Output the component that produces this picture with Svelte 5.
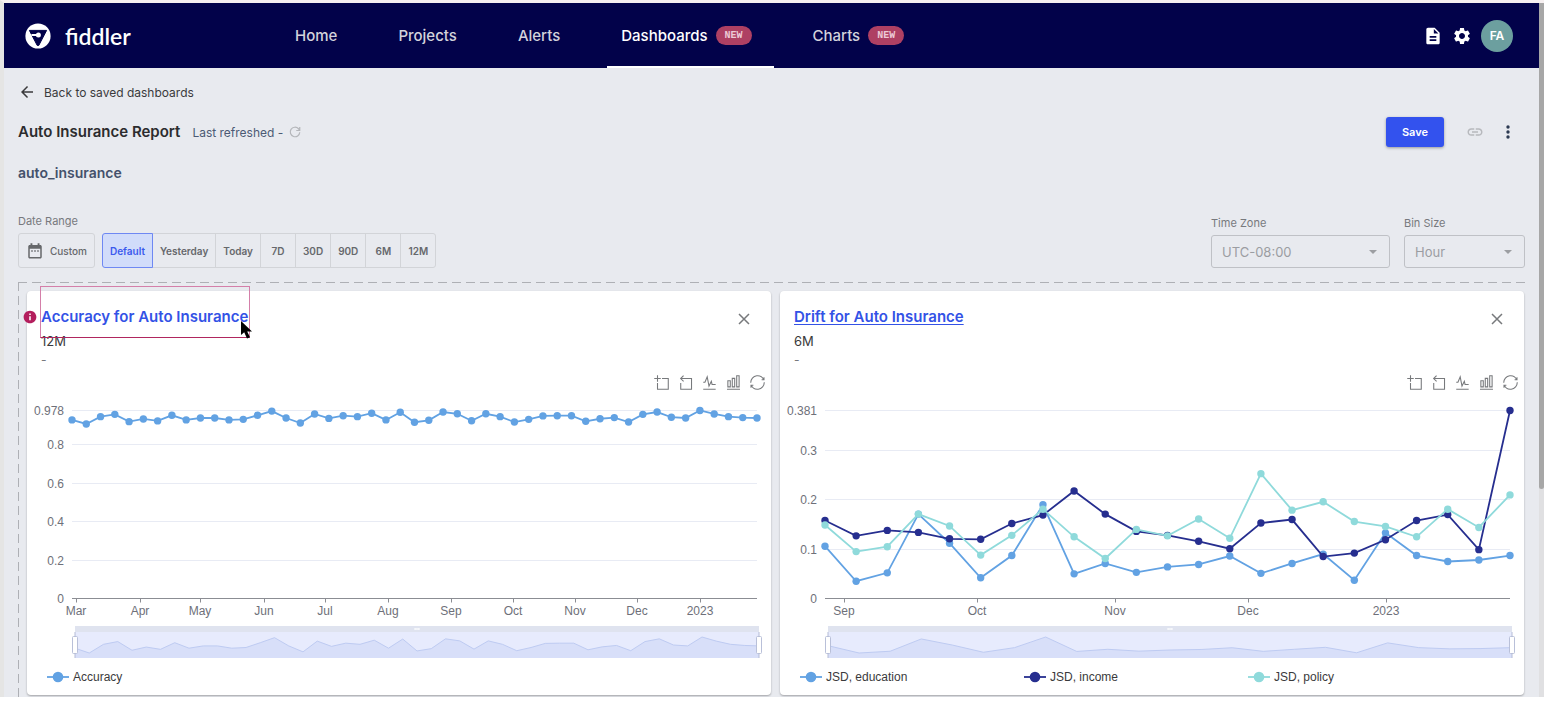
<script>
  const navItems = [
    { label: 'Home' },
    { label: 'Projects' },
    { label: 'Alerts' },
    { label: 'Dashboards', isNew: true, active: true },
    { label: 'Charts', isNew: true }
  ]

  const ranges = ['Default', 'Yesterday', 'Today', '7D', '30D', '90D', '6M', '12M']
  let selectedRange = $state('Default')

  const tools = [
    { name: 'Zoom', d: 'M0,13.5h26.9 M13.5,26.9V0 M32.1,13.5H58V58H13.5 V32.1' },
    { name: 'Zoom reset', d: 'M22,1.4L9.9,13.5l12.3,12.3 M10.3,13.5H54.9v44.6 H10.3v-26' },
    { name: 'Line chart', d: 'M4.1,28.9h7.1l9.3-22l7.4,38l9.7-19.7l3,12.8h14.9M4.1,58h51.4' },
    { name: 'Bar chart', d: 'M6.7,22.9h10V48h-10V22.9zM24.9,13h10v35h-10V13zM43.2,2h10v46h-10V2zM3.1,58h53.7' },
    { name: 'Restore', d: 'M47,18.9h9.8V8.7 M56.3,20.1 C52.1,9,40.5,0.6,26.8,2.1C12.6,3.7,1.6,16.2,2.1,30.6 M13,41.1H3.1v10.2 M3.7,39.9c4.2,11.1,15.8,19.5,29.5,18 c14.2-1.6,25.2-14.1,24.7-28.5' }
  ]

  const charts = [
    {
      title: 'Accuracy for Auto Insurance',
      period: '12M',
      highlighted: true,
      max: 0.978,
      yTicks: [0, 0.2, 0.4, 0.6, 0.8, 0.978],
      xTicks: [
        ['Mar', 49], ['Apr', 113], ['May', 173], ['Jun', 237], ['Jul', 298], ['Aug', 361],
        ['Sep', 424], ['Oct', 486], ['Nov', 548], ['Dec', 610], ['2023', 673]
      ],
      series: [
        {
          name: 'Accuracy',
          color: '#62a2e3',
          values: [
            .929, .908, .946, .958, .920, .934, .924, .953, .929, .939, .939, .929, .932, .953, .975,
            .939, .913, .960, .937, .951, .946, .964, .929, .969, .917, .927, .970, .961, .925, .961,
            .946, .918, .932, .950, .951, .951, .922, .935, .941, .918, .958, .970, .943, .939, .978,
            .960, .946, .941, .939
          ]
        }
      ]
    },
    {
      title: 'Drift for Auto Insurance',
      period: '6M',
      highlighted: false,
      max: 0.381,
      yTicks: [0, 0.1, 0.2, 0.3, 0.381],
      xTicks: [['Sep', 64], ['Oct', 197], ['Nov', 335], ['Dec', 468], ['2023', 606]],
      series: [
        {
          name: 'JSD, education',
          color: '#62a2e3',
          values: [
            .106, .035, .052, .171, .112, .042, .087, .190, .050, .071, .053, .064, .069, .086, .051,
            .071, .090, .037, .133, .087, .075, .078, .087
          ]
        },
        {
          name: 'JSD, income',
          color: '#262e8f',
          values: [
            .158, .127, .138, .134, .121, .120, .152, .169, .218, .171, .136, .128, .116, .101, .153,
            .160, .085, .092, .119, .158, .170, .099, .381
          ]
        },
        {
          name: 'JSD, policy',
          color: '#8fdadb',
          values: [
            .149, .095, .105, .171, .147, .088, .128, .181, .125, .081, .140, .127, .161, .122, .253,
            .179, .196, .156, .146, .125, .181, .144, .210
          ]
        }
      ]
    }
  ]

  // plot area inside the 744 x 262 viewBox
  const left = 45
  const right = 730
  const top = 10.5
  const bottom = 198.5

  function yPos(value, max) {
    return bottom - (value / max) * (bottom - top)
  }

  function points(values, max) {
    return values.map((v, i) => [
      left + (i * (right - left)) / (values.length - 1),
      yPos(v, max)
    ])
  }

  function sliderLine(values) {
    const lo = Math.min(...values)
    const hi = Math.max(...values)
    return values
      .map((v, i) => `${48 + (i * 684) / (values.length - 1)},${253 - ((v - lo) / (hi - lo)) * 16}`)
      .join(' ')
  }
</script>

<div class="app">
  <div class="content">
    <header>
      <a class="brand" href="/">
        <svg width="26" height="26" viewBox="0 0 26 26" aria-hidden="true">
          <circle cx="13" cy="13" r="12.6" fill="#fff" />
          <path d="M4.4 7.4h17.2L13.8 22.4h-1.6z" fill="#02024a" stroke="#02024a" stroke-linejoin="round" />
          <path d="M6.4 12h6" stroke="#fff" stroke-width="2" />
          <circle cx="13.4" cy="12" r="2.5" fill="#fff" />
        </svg>
        <span>fiddler</span>
      </a>
      <nav>
        {#each navItems as item}
          <a href="/{item.label.toLowerCase()}" class="tab" class:active={item.active}>
            {item.label}
            {#if item.isNew}<span class="new">NEW</span>{/if}
          </a>
        {/each}
      </nav>
      <div class="account">
        <button aria-label="Documentation">
          <svg width="20" height="20" viewBox="0 0 24 24" fill="#fff"><path d="M14 2H6c-1.1 0-1.99.9-1.99 2L4 20c0 1.1.89 2 1.99 2H18c1.1 0 2-.9 2-2V8l-6-6zm2 16H8v-2h8v2zm0-4H8v-2h8v2zm-3-5V3.5L18.5 9H13z" /></svg>
        </button>
        <button aria-label="Settings">
          <svg width="20" height="20" viewBox="0 0 24 24" fill="#fff"><path d="M19.14 12.94c.04-.3.06-.61.06-.94 0-.32-.02-.64-.07-.94l2.03-1.58c.18-.14.23-.41.12-.61l-1.92-3.32c-.12-.22-.37-.29-.59-.22l-2.39.96c-.5-.38-1.03-.7-1.62-.94l-.36-2.54c-.04-.24-.24-.41-.48-.41h-3.84c-.24 0-.43.17-.47.41l-.36 2.54c-.59.24-1.13.57-1.62.94l-2.39-.96c-.22-.08-.47 0-.59.22L2.74 8.87c-.12.21-.08.47.12.61l2.03 1.58c-.05.3-.09.63-.09.94s.02.64.07.94l-2.03 1.58c-.18.14-.23.41-.12.61l1.92 3.32c.12.22.37.29.59.22l2.39-.96c.5.38 1.03.7 1.62.94l.36 2.54c.05.24.24.41.48.41h3.84c.24 0 .44-.17.47-.41l.36-2.54c.59-.24 1.13-.56 1.62-.94l2.39.96c.22.08.47 0 .59-.22l1.92-3.32c.12-.22.07-.47-.12-.61l-2.01-1.58zM12 15.6c-1.98 0-3.6-1.62-3.6-3.6s1.62-3.6 3.6-3.6 3.6 1.62 3.6 3.6-1.62 3.6-3.6 3.6z" /></svg>
        </button>
        <button class="avatar">FA</button>
      </div>
    </header>

    <main>
      <a class="back" href="/dashboards">
        <svg width="18" height="18" viewBox="0 0 24 24" fill="#3a3a3c"><path d="M20 11H7.83l5.59-5.59L12 4l-8 8 8 8 1.41-1.41L7.83 13H20v-2z" /></svg>
        Back to saved dashboards
      </a>

      <div class="title-row">
        <h1>Auto Insurance Report</h1>
        <span class="refreshed">Last refreshed -</span>
        <button class="refresh" aria-label="Refresh">
          <svg width="12" height="12" viewBox="0 0 24 24" fill="none" stroke="#b4b6ba" stroke-width="2.4"><path d="M21.5 2v7h-7M21.5 12.5a9.5 9.5 0 1 1-2.5-7L21.5 8.5" /></svg>
        </button>
        <div class="actions">
          <button class="save">Save</button>
          <button aria-label="Copy link" disabled>
            <svg width="18" height="18" viewBox="0 0 24 24" fill="#b7b9bd"><path d="M3.9 12c0-1.71 1.39-3.1 3.1-3.1h4V7H7c-2.76 0-5 2.24-5 5s2.24 5 5 5h4v-1.9H7c-1.71 0-3.1-1.39-3.1-3.1zM8 13h8v-2H8v2zm9-6h-4v1.9h4c1.71 0 3.1 1.39 3.1 3.1s-1.39 3.1-3.1 3.1h-4V17h4c2.76 0 5-2.24 5-5s-2.24-5-5-5z" /></svg>
          </button>
          <button aria-label="More options">
            <svg width="18" height="18" viewBox="0 0 18 18" fill="#2c3a52"><circle cx="9" cy="4" r="1.7" /><circle cx="9" cy="9" r="1.7" /><circle cx="9" cy="14" r="1.7" /></svg>
          </button>
        </div>
      </div>

      <h2>auto_insurance</h2>

      <div class="filters">
        <div class="field">
          <span class="label" id="range-label">Date Range</span>
          <div class="range" role="group" aria-labelledby="range-label">
            <button class="custom">
              <svg width="18" height="18" viewBox="0 0 24 24" fill="#66686b"><path d="M9 11H7v2h2v-2zm4 0h-2v2h2v-2zm4 0h-2v2h2v-2zm2-7h-1V1.500h-2.500V4H8.500V1.500H6V4H5c-1.110 0-1.990.9-1.990 2L3 20c0 1.100.89 2 2 2h14c1.100 0 2-.9 2-2V6c0-1.100-.9-2-2-2zm0 16H5V9h14v11z" /></svg>
              Custom
            </button>
            <div class="toggle">
              {#each ranges as range}
                <button class:selected={range === selectedRange} onclick={() => (selectedRange = range)}>{range}</button>
              {/each}
            </div>
          </div>
        </div>
        <div class="field zone">
          <label class="label" for="zone">Time Zone</label>
          <div class="select">
            <select id="zone" disabled><option>UTC-08:00</option></select>
            <svg width="8" height="4" viewBox="0 0 8 4" fill="#9c9ea2"><path d="M0 0h8L4 4z" /></svg>
          </div>
        </div>
        <div class="field bin">
          <label class="label" for="bin">Bin Size</label>
          <div class="select">
            <select id="bin" disabled><option>Hour</option></select>
            <svg width="8" height="4" viewBox="0 0 8 4" fill="#9c9ea2"><path d="M0 0h8L4 4z" /></svg>
          </div>
        </div>
      </div>

      <div class="board">
        {#each charts as chart}
          <article>
            <div class="card-head">
              <div class="heading">
                <a href="/charts" class:plain-link={chart.highlighted}>{chart.title}</a>
                {#if chart.highlighted}
                  <svg class="info" width="14" height="14" viewBox="1 1 22 22" fill="#b31e5d"><path d="M12 2C6.480 2 2 6.480 2 12s4.480 10 10 10 10-4.480 10-10S17.520 2 12 2zm1.200 15h-2.400v-6h2.400v6zm0-8h-2.400V6.600h2.400V9z" /></svg>
                  <div class="marker"></div>
                  <svg class="cursor" width="11" height="18" viewBox="0 0 11 18"><path d="M0 0v14l3.200-2.800L6 17.500l3-1.300-2.800-5.700H11z" fill="#000" /></svg>
                {/if}
              </div>
              <button class="close" aria-label="Remove {chart.title}">
                <svg width="12" height="12" viewBox="0 0 12 12" stroke="#77797c" stroke-width="1.5"><path d="M1 1l10 10M11 1L1 11" /></svg>
              </button>
            </div>
            <p class="period">{chart.period}</p>
            <p class="dash">-</p>
            <div class="tools">
              {#each tools as tool}
                <button aria-label={tool.name}>
                  <svg width="15" height="15" viewBox="-1 -1 62 62" fill="none" stroke="#77797c" stroke-width="4.4"><path d={tool.d} /></svg>
                </button>
              {/each}
            </div>

            <svg class="plot" viewBox="0 0 744 262" role="img" aria-label={chart.title}>
              {#each chart.yTicks as tick}
                {@const y = Math.floor(yPos(tick, chart.max)) + 0.5}
                {#if tick > 0}
                  <line x1={left} x2={right} y1={y} y2={y} stroke="#e8ebf4" />
                {/if}
                <text x="37" y={y + 4} text-anchor="end">{tick}</text>
              {/each}
              <line x1={left} x2={right} y1={bottom} y2={bottom} stroke="#8b8d93" />
              {#each chart.xTicks as [label, x]}
                <line x1={x + 0.5} x2={x + 0.5} y1={bottom} y2={bottom + 4} stroke="#8b8d93" />
                <text {x} y="215" text-anchor="middle">{label}</text>
              {/each}

              {#each chart.series as s}
                {@const pts = points(s.values, chart.max)}
                <polyline points={pts.join(' ')} fill="none" stroke={s.color} stroke-width="1.8" />
                {#each pts as [cx, cy]}
                  <circle {cx} {cy} r="3.7" fill={s.color} />
                {/each}
              {/each}

              <rect x="48" y="226" width="684" height="6" fill="#dfe3ef" />
              <rect x="48" y="232" width="684" height="26" fill="#e7ebfd" />
              <polygon points="48,258 {sliderLine(chart.series[0].values)} 732,258" fill="#d8dff9" />
              <polyline points={sliderLine(chart.series[0].values)} fill="none" stroke="#becbf2" />
              <path d="M387.5 229h5" stroke="#fff" stroke-width="2" stroke-dasharray="1.2 .7" />
              {#each [48, 732] as x}
                <path d="M{x} 232v26" stroke="#b5bcd6" />
                <rect x={x - 2.5} y="236.5" width="5" height="17" rx="1" fill="#fff" stroke="#b9c0d9" />
              {/each}
            </svg>

            <div class="legend">
              {#each chart.series as s}
                <button>
                  <svg width="22" height="12" viewBox="0 0 22 12"><path d="M0 6h22" stroke={s.color} stroke-width="1.8" /><circle cx="11" cy="6" r="5.3" fill={s.color} /></svg>
                  {s.name}
                </button>
              {/each}
            </div>
          </article>
        {/each}
      </div>
    </main>
  </div>
  <div class="scrollbar"><div class="thumb"></div></div>
</div>

<style>
  :global(body) {
    background: #fff;
  }
  .app {
    display: flex;
    font-family: Inter, "Liberation Sans", sans-serif;
    border-top: 3px solid #f6f0f1;
    border-left: 4px solid #e5e5e4;
    background: #e8eaef;
  }
  .content {
    flex: 1;
    min-width: 0;
  }
  button {
    font-family: inherit;
    border: 0;
    padding: 0;
    background: none;
    cursor: pointer;
  }
  svg {
    display: block;
    flex-shrink: 0;
  }
  header {
    display: flex;
    height: 65px;
    padding: 0 26px 0 21px;
    background: #02024a;
  }
  .brand {
    display: flex;
    align-items: center;
    flex: 0 0 256px;
    gap: 14px;
    color: #fff;
    font-family: Lato, sans-serif;
    font-size: 23px;
    font-weight: 600;
    text-decoration: none;
  }
  nav {
    display: flex;
    gap: 25px;
  }
  .tab {
    display: flex;
    align-items: center;
    gap: 8px;
    padding: 2px 22px 0 14px;
    border-bottom: 2px solid transparent;
    color: #d3d3dc;
    font-size: 15px;
    font-weight: 500;
    text-decoration: none;
  }
  .tab.active {
    color: #fff;
    border-color: #fff;
  }
  .new {
    padding: 0 9px;
    border-radius: 10px;
    background: #ae4063;
    color: #ecc9d5;
    font-family: "Liberation Mono", monospace;
    font-size: 10px;
    font-weight: 700;
    line-height: 19px;
  }
  .account {
    display: flex;
    align-items: center;
    gap: 9px;
    margin-left: auto;
  }
  .avatar {
    width: 32px;
    height: 32px;
    border-radius: 50%;
    background: #6c9f9f;
    color: #fff;
    font-size: 12px;
    font-weight: 600;
  }
  main {
    padding: 14px 14px 0;
  }
  .back {
    display: flex;
    align-items: center;
    gap: 8px;
    height: 20px;
    color: #3a3a3c;
    font-size: 12px;
    text-decoration: none;
  }
  .title-row {
    display: flex;
    align-items: center;
    height: 30px;
    margin-top: 15px;
  }
  h1, h2 {
    margin: 0;
    font-size: 15px;
    line-height: 20px;
  }
  h1 {
    color: #2c2c2e;
    font-weight: 600;
  }
  h2 {
    margin-top: 16px;
    color: #44516b;
    font-size: 14px;
    font-weight: 600;
  }
  .refreshed {
    margin: 0 6px 0 12px;
    color: #4c5a74;
    font-size: 12px;
  }
  .actions {
    display: flex;
    align-items: center;
    gap: 15px;
    margin-left: auto;
    padding-right: 8px;
  }
  .save {
    width: 58px;
    height: 30px;
    margin-right: 7px;
    border-radius: 3px;
    background: #3352ee;
    box-shadow: 0 1px 3px rgba(0, 0, 0, 0.35);
    color: #fff;
    font-size: 11px;
    font-weight: 600;
  }
  .filters {
    display: flex;
    align-items: flex-end;
    gap: 14px;
    margin-top: 30px;
  }
  .field {
    display: flex;
    flex-direction: column;
    gap: 4px;
  }
  .zone {
    width: 179px;
    margin-left: auto;
  }
  .bin {
    width: 121px;
  }
  .label {
    color: #77797d;
    font-size: 11px;
    line-height: 16px;
  }
  .range {
    display: flex;
    gap: 7px;
  }
  .custom, .toggle button {
    box-sizing: border-box;
    height: 35px;
    border: 1px solid #d2d4d8;
    color: #66686c;
    font-size: 10px;
    font-weight: 600;
  }
  .custom {
    display: flex;
    align-items: center;
    gap: 6px;
    padding: 0 7px;
    border-radius: 3px;
    font-weight: 500;
  }
  .toggle {
    display: flex;
  }
  .toggle button {
    min-width: 36px;
    margin-left: -1px;
    padding: 0 7px;
  }
  .toggle button:first-child {
    margin-left: 0;
    border-radius: 3px 0 0 3px;
  }
  .toggle button:last-child {
    border-radius: 0 3px 3px 0;
  }
  .toggle button.selected {
    position: relative;
    border-color: #6e88f3;
    background: #d1dcfa;
    color: #3b59ee;
  }
  .select {
    display: grid;
    align-items: center;
  }
  .select select, .select svg {
    grid-area: 1 / 1;
  }
  .select svg {
    justify-self: end;
    margin-right: 13px;
    pointer-events: none;
  }
  select {
    appearance: none;
    box-sizing: border-box;
    width: 100%;
    height: 33px;
    padding: 0 10px;
    border: 1px solid #bfc1c6;
    border-radius: 3px;
    background: transparent;
    color: #9b9da2;
    font-family: inherit;
    font-size: 13px;
    opacity: 1;
  }
  .board {
    display: grid;
    grid-template-columns: 1fr 1fr;
    gap: 9px;
    margin-top: 14px;
    padding: 9px 1px 2px 9px;
    background:
      repeating-linear-gradient(90deg, #aeb0b5 0 9px, transparent 9px 14px) 0 0 / 100% 1px no-repeat,
      repeating-linear-gradient(180deg, #aeb0b5 0 9px, transparent 9px 14px) 0 0 / 1px 100% no-repeat;
  }
  article {
    min-width: 0;
    padding-bottom: 10px;
    border-radius: 4px;
    background: #fff;
    box-shadow: 0 1px 2px rgba(0, 0, 0, 0.3);
  }
  .card-head {
    display: flex;
    justify-content: space-between;
    align-items: center;
    padding: 16px 21px 0 14px;
  }
  .heading {
    position: relative;
    font-size: 15px;
    font-weight: 600;
    line-height: 20px;
  }
  .heading a {
    color: #3352e6;
    text-underline-offset: 2px;
    text-decoration-thickness: 1px;
  }
  .heading a.plain-link {
    text-decoration: none;
  }
  .info {
    position: absolute;
    left: -18px;
    top: 3px;
  }
  .marker {
    position: absolute;
    inset: -21px -2px -11px -1px;
    border: 1px solid #d47fa9;
    border-bottom-color: #b0265f;
  }
  .cursor {
    position: absolute;
    right: -4px;
    bottom: -12px;
  }
  .close {
    margin-top: 4px;
  }
  p {
    margin: 0 14px;
    line-height: 16px;
  }
  .period {
    margin-top: 6px;
    color: #3a3a3c;
    font-size: 13px;
  }
  .dash {
    margin-top: 3px;
    color: #77797d;
    font-size: 12px;
  }
  .tools {
    display: flex;
    justify-content: flex-end;
    gap: 9px;
    margin: 7px 6px 10px 0;
  }
  .plot {
    width: 100%;
    height: auto;
  }
  .plot text {
    fill: #6e7079;
    font-family: "Liberation Sans", Arial, sans-serif;
    font-size: 12px;
  }
  .legend {
    display: grid;
    grid-template-columns: repeat(3, 224px);
    margin: 7px 0 0 20px;
  }
  .legend button {
    display: flex;
    align-items: center;
    gap: 4px;
    color: #3a3a3c;
    font-family: "Liberation Sans", Arial, sans-serif;
    font-size: 12px;
    line-height: 16px;
  }
  .scrollbar {
    width: 5px;
    background: #e0e0e2;
  }
  .thumb {
    height: 70%;
    border-radius: 0 0 3px 3px;
    background: #a7a7a7;
  }
</style>
